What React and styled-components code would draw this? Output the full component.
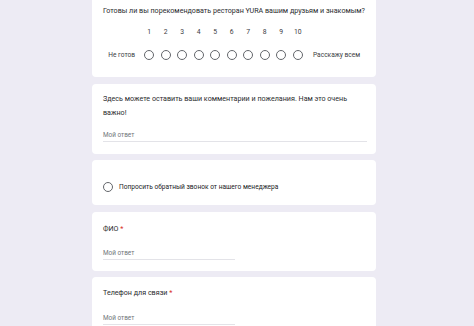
import React from "react";
import styled, { createGlobalStyle } from "styled-components";

const Global = createGlobalStyle`
  html, body { margin: 0; padding: 0; }
  body {
    background: #edebf4;
    font-family: Roboto, "Noto Sans", Arial, sans-serif;
    color: #202124;
    overflow: hidden;
  }
`;

const Column = styled.div`
  width: 284px;
  margin: -10px 0 0 92px;
  display: flex;
  flex-direction: column;
  gap: 6.5px;
`;

const Card = styled.div`
  background: #ffffff;
  border-radius: 4px;
  padding: ${(p) => p.$pad || "8px 9px 12px 11px"};
  display: flex;
  flex-direction: column;
`;

const Question = styled.div`
  font-size: 7.15px;
  line-height: 14px;
  color: #2a2b2e;
  white-space: nowrap;
`;

const Star = styled.span`
  color: #d93025;
`;

const Scale = styled.div`
  display: grid;
  grid-template-columns: 38px repeat(10, 16.5px) auto;
  align-items: center;
  margin-top: ${(p) => p.$mt || 0}px;
`;

const Num = styled.div`
  font-size: 6.8px;
  line-height: 10px;
  color: #3c4043;
  text-align: center;
`;

const ScaleLabel = styled.div`
  font-size: 6.6px;
  line-height: 10px;
  color: #3c4043;
  text-align: ${(p) => (p.$right ? "right" : "left")};
  padding: ${(p) => (p.$right ? "0 6px 0 0" : "0 0 0 7px")};
  white-space: nowrap;
`;

const Radio = styled.div`
  width: 8px;
  height: 8px;
  border: 1px solid #63666b;
  border-radius: 50%;
  justify-self: center;
  flex: none;
`;

const Answer = styled.div`
  width: ${(p) => p.$w}px;
  margin-top: ${(p) => p.$mt}px;
  font-size: 6.4px;
  line-height: 10px;
  color: #70757a;
  padding-bottom: 1px;
  border-bottom: 1px solid #e3e3e8;
`;

const Option = styled.div`
  display: flex;
  align-items: center;
  gap: 6px;
  font-size: 6.6px;
  line-height: 12px;
  color: #202124;
`;

const numbers = [1, 2, 3, 4, 5, 6, 7, 8, 9, 10];

export default function App() {
  return (
    <>
      <Global />
      <Column>
        <Card $pad="14px 9px 17px 11px">
          <Question>Готовы ли вы порекомендовать ресторан YURA вашим друзьям и знакомым?</Question>
          <Scale $mt={9}>
            <div />
            {numbers.map((n) => (
              <Num key={n}>{n}</Num>
            ))}
            <div />
          </Scale>
          <Scale $mt={13}>
            <ScaleLabel $right>Не готов</ScaleLabel>
            {numbers.map((n) => (
              <Radio key={n} />
            ))}
            <ScaleLabel>Расскажу всем</ScaleLabel>
          </Scale>
        </Card>

        <Card $pad="8px 9px 12px 11px">
          <Question>
            Здесь можете оставить ваши комментарии и пожелания. Нам это очень
            <br />
            важно!
          </Question>
          <Answer $w={264} $mt={10}>Мой ответ</Answer>
        </Card>

        <Card $pad="21px 9px 12px 11px">
          <Option>
            <Radio />
            Попросить обратный звонок от нашего менеджера
          </Option>
        </Card>

        <Card $pad="10px 9px 11px 11px">
          <Question>
            ФИО <Star>*</Star>
          </Question>
          <Answer $w={132} $mt={12}>Мой ответ</Answer>
        </Card>

        <Card $pad="9px 9px 12px 11px">
          <Question>
            Телефон для связи <Star>*</Star>
          </Question>
          <Answer $w={132} $mt={13}>Мой ответ</Answer>
        </Card>
      </Column>
    </>
  );
}
